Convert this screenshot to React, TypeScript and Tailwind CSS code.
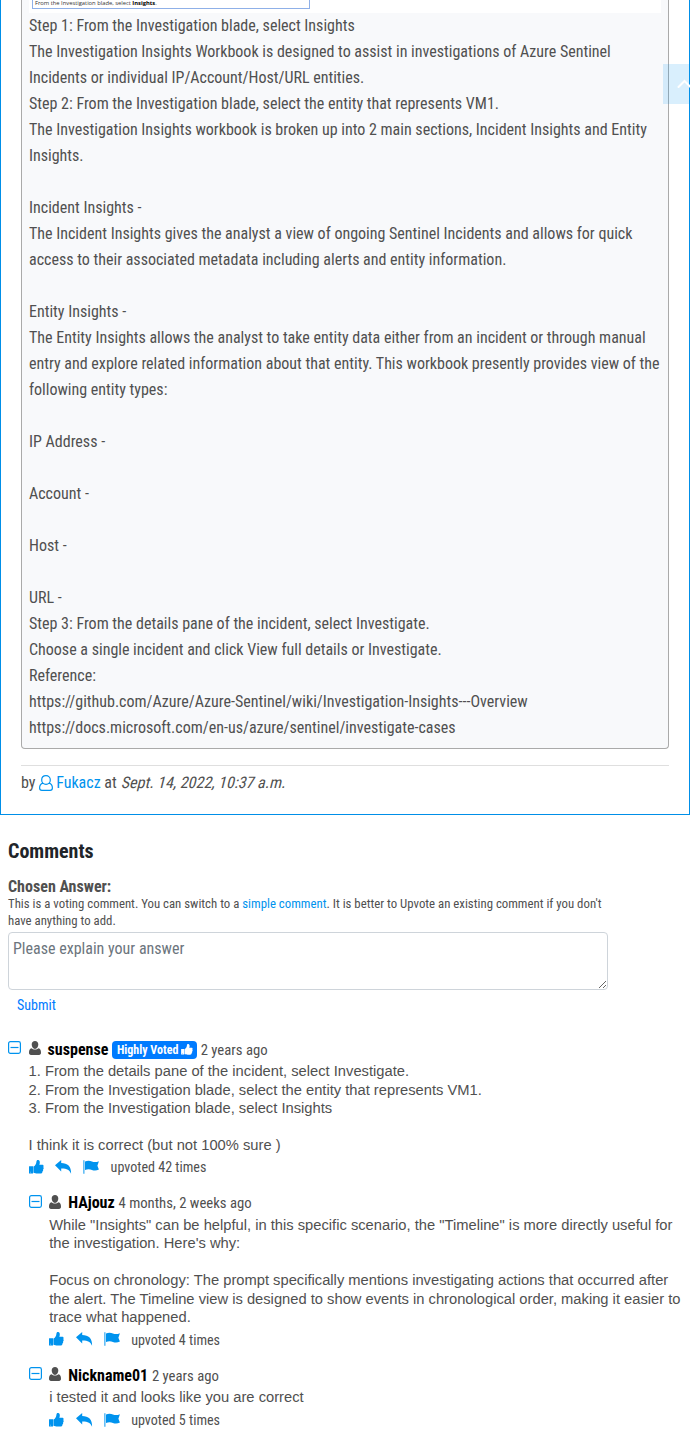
import React from "react";

const answerLines: string[] = [
  "Step 1: From the Investigation blade, select Insights",
  "The Investigation Insights Workbook is designed to assist in investigations of Azure Sentinel",
  "Incidents or individual IP/Account/Host/URL entities.",
  "Step 2: From the Investigation blade, select the entity that represents VM1.",
  "The Investigation Insights workbook is broken up into 2 main sections, Incident Insights and Entity",
  "Insights.",
  "",
  "Incident Insights -",
  "The Incident Insights gives the analyst a view of ongoing Sentinel Incidents and allows for quick",
  "access to their associated metadata including alerts and entity information.",
  "",
  "Entity Insights -",
  "The Entity Insights allows the analyst to take entity data either from an incident or through manual",
  "entry and explore related information about that entity. This workbook presently provides view of the",
  "following entity types:",
  "",
  "IP Address -",
  "",
  "Account -",
  "",
  "Host -",
  "",
  "URL -",
  "Step 3: From the details pane of the incident, select Investigate.",
  "Choose a single incident and click View full details or Investigate.",
  "Reference:",
  "https://github.com/Azure/Azure-Sentinel/wiki/Investigation-Insights---Overview",
  "https://docs.microsoft.com/en-us/azure/sentinel/investigate-cases",
];

function ThumbIcon({ className }: { className: string }) {
  return (
    <svg viewBox="0 0 15 14" className={className} fill="currentColor">
      <path
        fillRule="evenodd"
        d="M.3 6.300h3.700v7.200H.3a.3.3 0 0 1-.3-.3V6.600a.3.3 0 0 1 .3-.3zM1.500 11.700a.4.4 0 1 0 0 .8.4.4 0 0 0 0-.8z"
      />
      <path d="M4.400 6.600C6.100 5.700 7.200 4 7.400 1.900 7.500.5 8.200-.1 9.200.1c1.900.4 1.900 2.700 1.100 4.600h2.800c1.500 0 2 1.500 1.100 2.400.8.8.5 1.900-.2 2.300.4.8.1 1.700-.6 2 .2 1.300-.6 2.200-1.900 2.200H8.400c-1.500 0-2.500-.7-4-.9z" />
    </svg>
  );
}

function ReplyIcon() {
  return (
    <svg viewBox="0 0 17 14" className="h-[14px] w-[17px]" fill="currentColor">
      <path d="M0 5.200 6.200 0v2.900c6.300.1 10.200 3 9.900 10.900-1.300-3.700-4.300-5.500-9.900-5.400v3z" />
    </svg>
  );
}

function FlagIcon() {
  return (
    <svg viewBox="0 0 17 14" className="h-[14px] w-[17px]" fill="currentColor">
      <path d="M.2.2h1.300v13.600H.2z" opacity=".75" />
      <path d="M2 1.500c2.300-1.200 4.900-1 6.900-.1 2.300 1 4.500.8 7-.2l-1.500 4.500 1.500 3.900c-2.500 1.200-4.800 1.200-7 .3-2-.8-4.700-.9-6.900.2z" />
    </svg>
  );
}

function PersonIcon() {
  return (
    <svg viewBox="0 0 12 14" className="h-[14px] w-[12px] text-[#505050]" fill="currentColor">
      <path d="M6 0c2 0 3.300 1.500 3.300 3.500S8 7.900 6 7.900 2.700 5.500 2.700 3.500 4 0 6 0zM2.500 7.200C3.500 8.100 4.600 8.500 6 8.500s2.500-.4 3.500-1.300C11.300 7.500 12 9.300 12 11.800c0 1.500-.7 2.100-2 2.100H2c-1.300 0-2-.6-2-2.100 0-2.500.7-4.300 2.500-4.600z" />
    </svg>
  );
}

function CollapseIcon() {
  return (
    <svg viewBox="0 0 13 13" className="h-[13px] w-[13px] text-[#0093ee]" fill="none" stroke="currentColor">
      <rect x=".6" y=".6" width="11.800" height="11.800" rx="1.800" strokeWidth="1.200" />
      <path d="M2.500 6.500h8" strokeWidth="1.200" />
    </svg>
  );
}

type CommentProps = {
  name: string;
  ago: string;
  votes: number;
  lines: string[];
  highly?: boolean;
};

function Comment({ name, ago, votes, lines, highly }: CommentProps) {
  return (
    <div className="flex">
      <div className="w-[20.600px] shrink-0 pt-[2px]">
        <CollapseIcon />
      </div>
      <div className="min-w-0">
        <div className="flex h-[23px] items-center whitespace-nowrap pb-[2px]">
          <span className="-mt-[3px]">
            <PersonIcon />
          </span>
          <span className="ml-[7px] text-[16px] font-bold text-black">{name}</span>
          {highly && (
            <span className="ml-[3.500px] flex h-[18px] w-[85px] items-center rounded-[4px] bg-[#007bff] pl-[5px] text-[12px] font-bold text-white">
              Highly Voted
              <ThumbIcon className="-mt-px ml-[2.500px] h-[11px] w-[12px] shrink-0" />
            </span>
          )}
          <span className="ml-[3.800px] text-[14.720px]">{ago}</span>
        </div>
        <div className="font-['Liberation_Sans',sans-serif] text-[14.720px] leading-[18.400px] [font-stretch:normal]">
          {lines.map((line, i) => (
            <div key={i} className="h-[18.400px] whitespace-nowrap">
              {line}
            </div>
          ))}
        </div>
        <div className="flex h-[27px] items-center text-[14.080px] text-[#0093ee]">
          <ThumbIcon className="-mt-[1px] h-[14px] w-[15px]" />
          <span className="-mt-[1px] ml-[11.500px]"><ReplyIcon /></span>
          <span className="-mt-[1px] ml-[11px]"><FlagIcon /></span>
          <span className="ml-[10.500px] pt-[.600px] text-[#505050]">upvoted {votes} times</span>
        </div>
      </div>
    </div>
  );
}

export default function App() {
  return (
    <div className="relative h-[1430px] w-[690px] overflow-hidden bg-white font-['Roboto_Condensed',Roboto,sans-serif] text-[16px] text-[#505050] [font-stretch:75%]">
      <section className="h-[815px] border-x border-b border-[#008fe8] px-[20px]">
        <div className="h-[749px] rounded-b-[4px] border-x border-b border-[#aaa] bg-[#f8f9fb] px-[7px]">
          <div className="h-[13px] bg-white pl-[3px]">
            <div className="h-[9px] w-[278px] border-x border-b border-[#8fb0e8] pl-[2px] font-['Open_Sans',sans-serif] text-[5.800px] leading-[6px] text-[#333] [font-stretch:normal]">
              From the Investigation blade, select <b className="text-black">Insights</b>.
            </div>
          </div>
          {answerLines.map((line, i) => (
            <div key={i} className="h-[26px] whitespace-nowrap leading-[26px]">
              {line}
            </div>
          ))}
        </div>
        <hr className="mt-4 border-[#dfdfdf]" />
        <div className="mt-[4px] flex h-[26px] items-center whitespace-pre">
          by{" "}
          <svg viewBox="0 0 14 16" className="-mt-[1px] mr-[3px] h-[16px] w-[14px] text-[#0093ee]" fill="none" stroke="currentColor" strokeWidth="1.200">
            <path d="M7 .7c2.500 0 4.300 1.700 4.300 4.200S9.500 9.300 7 9.300 2.700 7.400 2.700 4.900 4.500.7 7 .7zM3.900 8.100C1.800 8.700.6 10.200.6 13c0 1.600.8 2.400 2.300 2.400h8.200c1.500 0 2.300-.8 2.300-2.400 0-2.800-1.200-4.300-3.300-4.900" />
          </svg>
          <span className="text-[#0093ee]">Fukacz</span> at{" "}
          <span className="ml-[1.500px] inline-block -skew-x-[14deg]">Sept. 14, 2022, 10:37 a.m.</span>
        </div>
      </section>

      <section className="px-2">
        <h2 className="mt-[24px] h-[24px] text-[20px] font-bold leading-[24px] text-[#212529]">Comments</h2>
        <div className="mt-[12px] h-[24px] font-bold leading-[24px]">Chosen Answer:</div>
        <div className="-mt-[4px] whitespace-nowrap text-[12.800px] leading-[17px]">
          <div>
            This is a voting comment. You can switch to a <span className="text-[#0093ee]">simple comment</span>. It is better to Upvote an existing comment if you don't
          </div>
          <div>have anything to add.</div>
        </div>
        <textarea
          placeholder="Please explain your answer"
          className="mt-[3px] block h-[58px] w-[600px] resize rounded-[4px] border border-[#ced4da] px-1 py-1 leading-6 placeholder:text-[#6c757d]"
        />
        <button className="ml-[9px] mt-[4px] block h-[22px] text-[14px] leading-[22px] text-[#007bff]">Submit</button>
      </section>

      <section className="pl-2 pt-[23.300px]">
        <Comment
          name="suspense"
          ago="2 years ago"
          votes={42}
          highly
          lines={[
            "1. From the details pane of the incident, select Investigate.",
            "2. From the Investigation blade, select the entity that represents VM1.",
            "3. From the Investigation blade, select Insights",
            "",
            "I think it is correct (but not 100% sure )",
          ]}
        />
        <div className="flex flex-col gap-[12px] pl-[20.600px] pt-[11.700px]">
          <Comment
            name="HAjouz"
            ago="4 months, 2 weeks ago"
            votes={4}
            lines={[
              'While "Insights" can be helpful, in this specific scenario, the "Timeline" is more directly useful for',
              "the investigation. Here's why:",
              "",
              "Focus on chronology: The prompt specifically mentions investigating actions that occurred after",
              "the alert. The Timeline view is designed to show events in chronological order, making it easier to",
              "trace what happened.",
            ]}
          />
          <Comment
            name="Nickname01"
            ago="2 years ago"
            votes={5}
            lines={["i tested it and looks like you are correct"]}
          />
        </div>
      </section>

      <div className="absolute right-0 top-[64px] flex h-[40px] w-[27px] justify-end overflow-hidden bg-[#0093ee]/15">
        <svg viewBox="0 0 13 40" className="h-[40px] w-[13px]" fill="none" stroke="white" strokeWidth="2" strokeLinecap="round">
          <path d="m1.500 23 6-6 6 6" />
        </svg>
      </div>
    </div>
  );
}
